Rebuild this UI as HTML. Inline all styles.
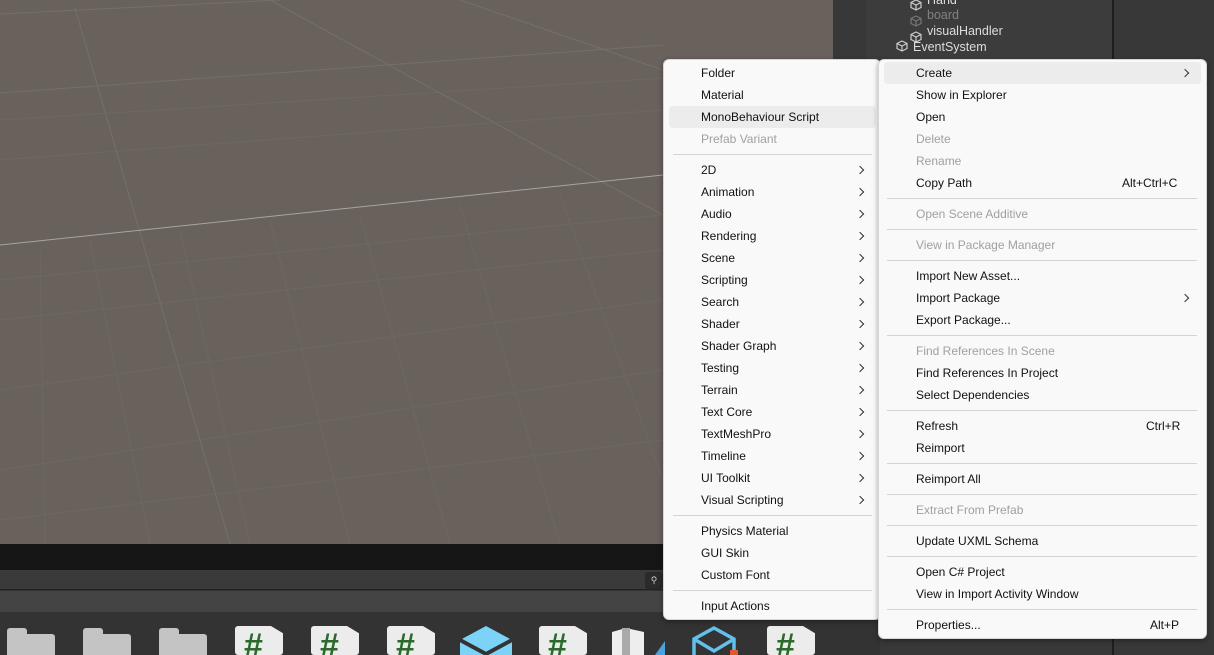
<!DOCTYPE html>
<html><head><meta charset="utf-8"><style>
*{margin:0;padding:0;box-sizing:border-box}
html,body{width:1214px;height:655px;overflow:hidden}
body{position:relative;background:#333;font-family:"Liberation Sans","Noto Sans CJK KR",sans-serif;font-size:12px}
.a{position:absolute}
.menu{position:absolute;background:#f9f9f9;border:1px solid #d6d6d6;border-radius:6px;box-shadow:0 2px 6px rgba(0,0,0,.35)}
.it{position:absolute;line-height:16px;color:#111;white-space:nowrap}
.dis{color:#a0a0a0}
.sep{position:absolute;height:1px;background:#d4d4d4}
.arr{position:absolute;width:6px;height:6px;border-right:1.3px solid #333;border-top:1.3px solid #333;transform:rotate(45deg)}
.hl{position:absolute;background:#ececec;border-radius:4px}
.sc{position:absolute;top:626px;width:48px;height:29px;background:#ececec;clip-path:polygon(0 0,75% 0,100% 25%,100% 100%,0 100%);border-radius:3px;overflow:hidden}
.sc span{position:absolute;left:9px;top:3px;font:bold 34px "Liberation Sans",sans-serif;color:#2b6a2b;line-height:34px}
.fo{position:absolute;top:634px;width:48px;height:30px;background:#c4c4c4;border-radius:3px}
.fo:before{content:"";position:absolute;left:0;top:-6px;width:20px;height:8px;background:#c4c4c4;border-radius:3px 3px 0 0}
.h{position:absolute;color:#ddd;font-size:12.5px}
</style></head><body>
<div class="a" style="left:0;top:0;width:833px;height:544px;background:#68615c;overflow:hidden">
<svg width="833" height="544" style="position:absolute;left:0;top:0">
<g stroke="#6e6862" stroke-width="1" fill="none">
<line x1="0" y1="320" x2="663" y2="250"/><line x1="0" y1="390" x2="663" y2="300"/><line x1="0" y1="470" x2="663" y2="370"/><line x1="0" y1="120" x2="663" y2="78"/><line x1="0" y1="160" x2="663" y2="110"/><line x1="0" y1="280" x2="663" y2="215"/><line x1="0" y1="520" x2="663" y2="440"/>
<line x1="40" y1="250" x2="45" y2="544"/><line x1="90" y1="240" x2="150" y2="544"/><line x1="180" y1="230" x2="250" y2="544"/><line x1="270" y1="220" x2="350" y2="544"/><line x1="360" y1="215" x2="450" y2="544"/><line x1="460" y1="205" x2="560" y2="544"/><line x1="560" y1="195" x2="663" y2="480"/>
</g>
<g stroke="#75706a" stroke-width="1" fill="none">
<line x1="0" y1="14" x2="280" y2="0"/><line x1="0" y1="93" x2="663" y2="45"/><line x1="75" y1="8" x2="230" y2="544"/><line x1="270" y1="0" x2="663" y2="215"/><line x1="460" y1="0" x2="663" y2="70"/>
</g>
<line x1="0" y1="245" x2="663" y2="175" stroke="#aaa5a0" stroke-width="1"/>
</svg></div>
<div class="a" style="left:833px;top:0;width:381px;height:655px;background:#383838"></div>
<div class="a" style="left:866px;top:0;width:246px;height:60px;background:#3c3c3c"></div>
<div class="a" style="left:1112px;top:0;width:2px;height:655px;background:#1e1e1e"></div>
<div class="h" style="left:927px;top:-7px">Hand</div>
<div class="h" style="left:927px;top:8px;color:#808080">board</div>
<div class="h" style="left:927px;top:24px">visualHandler</div>
<div class="h" style="left:913px;top:40px">EventSystem</div>
<svg class="a" style="left:909px;top:-3px" width="16" height="60" fill="none" stroke="#ccc" stroke-width="1.2">
<path d="M7 3l5 2.5v5l-5 2.5-5-2.5v-5z M2 5.5l5 2.5 5-2.5 M7 8v5"/>
<path d="M7 19l5 2.5v5l-5 2.5-5-2.5v-5z M2 21.5l5 2.5 5-2.5 M7 24v5" stroke="#777"/>
<path d="M7 35l5 2.5v5l-5 2.5-5-2.5v-5z M2 37.5l5 2.5 5-2.5 M7 40v5"/>
</svg>
<svg class="a" style="left:895px;top:40px" width="16" height="16" fill="none" stroke="#ccc" stroke-width="1.2"><path d="M7 1l5 2.5v5l-5 2.5-5-2.5v-5z M2 3.5l5 2.5 5-2.5 M7 6v5"/></svg>
<div class="a" style="left:0;top:544px;width:880px;height:26px;background:#161616"></div>
<div class="a" style="left:0;top:570px;width:880px;height:20px;background:#3a3a3a;border-bottom:1px solid #222"></div>
<div class="a" style="left:645px;top:572px;width:18px;height:17px;background:#2a2a2a;border-radius:3px;color:#ccc;font-size:9px;text-align:center;line-height:17px">⚲</div>
<div class="a" style="left:0;top:591px;width:880px;height:21px;background:#444"></div>
<div class="a" style="left:0;top:612px;width:880px;height:43px;background:#333"></div>
<div class="fo" style="left:7px"></div><div class="fo" style="left:83px"></div><div class="fo" style="left:159px"></div>
<div class="sc" style="left:235px"><span>#</span></div>
<div class="sc" style="left:311px"><span>#</span></div>
<div class="sc" style="left:387px"><span>#</span></div>
<div class="sc" style="left:539px"><span>#</span></div>
<div class="sc" style="left:767px"><span>#</span></div>
<svg class="a" style="left:459px;top:626px" width="54" height="29"><path d="M27 0l26 14v16H1V14z" fill="#7dd3f7"/><path d="M1 14l26 14 26-14" stroke="#333" stroke-width="4" fill="none"/></svg>
<svg class="a" style="left:610px;top:628px" width="60" height="27"><path d="M2 4l14-4 18 4v23H2z" fill="#eee"/><path d="M16 0v27" stroke="#aaa" stroke-width="8"/><path d="M45 27l10-14v14z" fill="#4aa3df"/></svg>
<svg class="a" style="left:690px;top:626px" width="54" height="29" fill="none" stroke="#62c0ec" stroke-width="3.5"><path d="M24 2l20 11v20H4V13z M4 13l20 12 20-12"/><rect x="40" y="24" width="8" height="6" fill="#e05a2a" stroke="none"/></svg>
<div class="menu" style="left:663px;top:59px;width:218px;height:561px">
<div class="hl" style="left:5px;top:46px;width:207px;height:22px"></div>
</div>
<div class="menu" style="left:878px;top:59px;width:329px;height:580px">
<div class="hl" style="left:5px;top:2px;width:317px;height:22px"></div>
</div>
<script>
function T(x,y,t,c){var d=document.createElement('div');d.className='it'+(c?' '+c:'');d.style.left=x+'px';d.style.top=(y-7)+'px';d.textContent=t;document.body.appendChild(d)}
function S(x,y,w){var d=document.createElement('div');d.className='sep';d.style.left=x+'px';d.style.top=y+'px';d.style.width=w+'px';document.body.appendChild(d)}
function A(x,y){var d=document.createElement('div');d.className='arr';d.style.left=x+'px';d.style.top=(y-3)+'px';document.body.appendChild(d)}
T(701,72,'Folder');T(701,94,'Material');T(701,116,'MonoBehaviour Script');T(701,138,'Prefab Variant','dis');S(673,154,199);
var sub=['2D','Animation','Audio','Rendering','Scene','Scripting','Search','Shader','Shader Graph','Testing','Terrain','Text Core','TextMeshPro','Timeline','UI Toolkit','Visual Scripting'];
sub.forEach(function(s,i){T(701,169+22*i,s);A(857,170+22*i)});
S(673,515,199);T(701,530,'Physics Material');T(701,552,'GUI Skin');T(701,574,'Custom Font');S(673,590,199);T(701,605,'Input Actions');
var R=[[72,'Create'],[94,'Show in Explorer'],[116,'Open'],[138,'Delete','dis'],[160,'Rename','dis'],[182,'Copy Path'],[213,'Open Scene Additive','dis'],[244,'View in Package Manager','dis'],[275,'Import New Asset...'],[297,'Import Package'],[319,'Export Package...'],[350,'Find References In Scene','dis'],[372,'Find References In Project'],[394,'Select Dependencies'],[425,'Refresh'],[447,'Reimport'],[478,'Reimport All'],[509,'Extract From Prefab','dis'],[540,'Update UXML Schema'],[571,'Open C# Project'],[593,'View in Import Activity Window'],[624,'Properties...']];
R.forEach(function(r){T(916,r[0],r[1],r[2])});
[198,229,260,335,410,463,494,525,556,609].forEach(function(y){S(887,y,310)});
A(1182,73);A(1182,298);
T(1122,182,'Alt+Ctrl+C');T(1146,425,'Ctrl+R');T(1150,624,'Alt+P');
</script>
</body></html>
